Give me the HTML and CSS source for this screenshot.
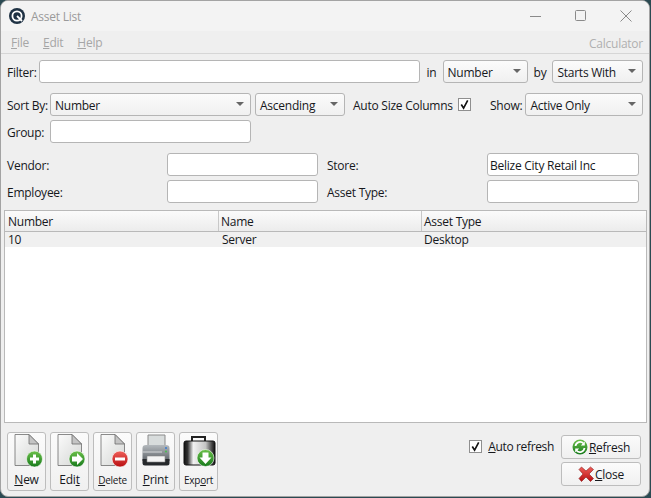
FILE: index.html
```html
<!DOCTYPE html>
<html lang="en">
<head>
  <meta charset="UTF-8">
  <title>Asset List</title>
  <link rel="stylesheet" href="styles.css">
</head>
<body>
  <svg class="defs" width="0" height="0">
    <defs>
      <linearGradient id="paper" x1="0" y1="0" x2="1" y2="1">
        <stop offset="0" stop-color="#fbfbfb"/>
        <stop offset="1" stop-color="#d4d6d4"/>
      </linearGradient>
      <linearGradient id="green" x1="0" y1="0" x2="0" y2="1">
        <stop offset="0" stop-color="#6cc04a"/>
        <stop offset="1" stop-color="#177a1c"/>
      </linearGradient>
      <linearGradient id="red" x1="0" y1="0" x2="0" y2="1">
        <stop offset="0" stop-color="#f0605a"/>
        <stop offset="1" stop-color="#b80d10"/>
      </linearGradient>
      <linearGradient id="metal" x1="0" y1="0" x2="1" y2="0">
        <stop offset="0" stop-color="#111"/>
        <stop offset="0.12" stop-color="#333"/>
        <stop offset="0.3" stop-color="#f2f2f2"/>
        <stop offset="0.7" stop-color="#c4c4c4"/>
        <stop offset="0.9" stop-color="#444"/>
        <stop offset="1" stop-color="#111"/>
      </linearGradient>
      <linearGradient id="printer" x1="0" y1="0" x2="0" y2="1">
        <stop offset="0" stop-color="#b4b9bd"/>
        <stop offset="1" stop-color="#5f646a"/>
      </linearGradient>
      <symbol id="page" viewBox="0 0 26 33">
        <path d="M1 .5H15L24.5 10V31.5H1Z" fill="url(#paper)" stroke="#6d6d6d" stroke-width=".8"/>
        <path d="M15 .5V10H24.5Z" fill="#c4c4c4" stroke="#6d6d6d" stroke-width=".8"/>
      </symbol>
    </defs>
  </svg>

  <div class="window">
    <!-- Title bar -->
    <div class="titlebar">
      <svg class="logo" viewBox="0 0 16 16">
        <circle cx="8" cy="8" r="8" fill="#1f3244"/>
        <circle cx="8" cy="8" r="4.6" fill="none" stroke="#fff" stroke-width="1.8"/>
        <path d="M8 8L13 13" stroke="#fff" stroke-width="1.8"/>
      </svg>
      <span class="title">Asset List</span>
      <div class="win-btns">
        <svg viewBox="0 0 12 12"><path d="M0 6.5H11" stroke="#8a8a8a"/></svg>
        <svg viewBox="0 0 12 12"><rect x=".5" y=".5" width="10" height="10" rx="1" fill="none" stroke="#8a8a8a"/></svg>
        <svg viewBox="0 0 12 12"><path d="M.5 .5L11.5 11.5M11.5 .5L.5 11.5" stroke="#8a8a8a"/></svg>
      </div>
    </div>

    <!-- Menu -->
    <div class="menubar">
      <span class="menu"><u>F</u>ile</span>
      <span class="menu"><u>E</u>dit</span>
      <span class="menu"><u>H</u>elp</span>
      <span class="calc">Calculator</span>
    </div>

    <!-- Filters -->
    <div class="filters">
      <div class="row row-filter">
        <label>Filter:</label>
        <input type="text" class="grow">
        <label class="in">in</label>
        <div class="combo w-in">Number</div>
        <label class="by">by</label>
        <div class="combo w-by">Starts With</div>
      </div>
      <div class="row row-sort">
        <label>Sort By:</label>
        <div class="combo w-sort">Number</div>
        <div class="combo w-order">Ascending</div>
        <label class="autosize">Auto Size Columns</label>
        <span class="check">
          <svg viewBox="0 0 12 12"><path d="M2.5 6L5 10L9.5 1.5" fill="none" stroke="#111" stroke-width="1.8"/></svg>
        </span>
        <label class="show">Show:</label>
        <div class="combo w-show">Active Only</div>
      </div>
      <div class="row row-group">
        <label>Group:</label>
        <input type="text" class="w-group">
      </div>
      <div class="detail-grid">
        <label>Vendor:</label>
        <input type="text">
        <label>Store:</label>
        <input type="text" value="Belize City Retail Inc">
        <label>Employee:</label>
        <input type="text">
        <label>Asset Type:</label>
        <input type="text">
      </div>
    </div>

    <!-- Table -->
    <div class="list">
      <div class="list-head">
        <div class="col-number">Number</div>
        <div class="col-name">Name</div>
        <div class="col-type">Asset Type</div>
      </div>
      <div class="list-row">
        <div class="col-number">10</div>
        <div class="col-name">Server</div>
        <div class="col-type">Desktop</div>
      </div>
    </div>

    <!-- Bottom buttons -->
    <div class="footer">
      <div class="tools">
        <button class="tool">
          <svg class="tool-icon" viewBox="0 0 36 38">
            <use href="#page" x="5" y="0" width="26" height="33"/>
            <circle cx="25.5" cy="25" r="8" fill="url(#green)" stroke="#fff" stroke-width=".6"/>
            <path d="M25.5 20.5V29.5M21 25H30" stroke="#fff" stroke-width="3"/>
          </svg>
          <span><u>N</u>ew</span>
        </button>
        <button class="tool">
          <svg class="tool-icon" viewBox="0 0 36 38">
            <use href="#page" x="5" y="0" width="26" height="33"/>
            <circle cx="25" cy="25" r="8" fill="url(#green)" stroke="#fff" stroke-width=".6"/>
            <path d="M20 22.5H25V19L31 25L25 31V27.5H20Z" fill="#fff"/>
          </svg>
          <span>Edi<u>t</u></span>
        </button>
        <button class="tool">
          <svg class="tool-icon" viewBox="0 0 36 38">
            <use href="#page" x="5" y="0" width="26" height="33"/>
            <circle cx="25" cy="25" r="8" fill="url(#red)" stroke="#fff" stroke-width=".6"/>
            <path d="M20 25H30" stroke="#fff" stroke-width="3"/>
          </svg>
          <span class="small"><u>D</u>elete</span>
        </button>
        <button class="tool">
          <svg class="tool-icon" viewBox="0 0 36 38">
            <path d="M10 1H27V12H10Z" fill="#d8dcdc" stroke="#8a8a8a"/>
            <path d="M4.5 14Q4.5 11 8 11H28Q31.5 11 31.5 14V27H4.5Z" fill="url(#printer)"/>
            <circle cx="28" cy="14" r="1.1" fill="#3f7fd0"/>
            <circle cx="28" cy="17.5" r="1.1" fill="#4dbb55"/>
            <path d="M4.5 18H24" stroke="#d5d8da" stroke-width="1.2"/>
            <path d="M4.5 25H31.5V29Q31.5 31.5 29 31.5H7Q4.5 31.5 4.5 29Z" fill="#26292c"/>
            <path d="M9 22H27V28H9Z" fill="#f4f4f4" stroke="#888" stroke-width=".6"/>
          </svg>
          <span><u>P</u>rint</span>
        </button>
        <button class="tool">
          <svg class="tool-icon" viewBox="0 0 36 38">
            <path d="M11 7V3H24V7" fill="none" stroke="#222" stroke-width="2"/>
            <rect x="3" y="7" width="31" height="24" rx="2" fill="url(#metal)" stroke="#111"/>
            <circle cx="24.5" cy="24" r="8.5" fill="url(#green)" stroke="#fff" stroke-width=".6"/>
            <path d="M21.5 18.5H27.5V23.5H30.5L24.5 30L18.5 23.5H21.5Z" fill="#fff"/>
          </svg>
          <span class="small">Exp<u>o</u>rt</span>
        </button>
      </div>
      <div class="auto-refresh">
        <span class="check">
          <svg viewBox="0 0 12 12"><path d="M2.5 6L5 10L9.5 1.5" fill="none" stroke="#111" stroke-width="1.8"/></svg>
        </span>
        <span class="auto-label"><u>A</u>uto refresh</span>
      </div>
      <div class="actions">
        <button class="action">
          <svg viewBox="0 0 16 16">
            <circle cx="8" cy="8" r="7.5" fill="url(#green)"/>
            <path d="M3.5 7A4.6 4.6 0 0 1 11.5 4.5M12.5 9A4.6 4.6 0 0 1 4.5 11.5" fill="none" stroke="#fff" stroke-width="1.8"/>
            <path d="M12.8 2.5V6.5H8.8Z M3.2 13.5V9.5H7.2Z" fill="#fff"/>
          </svg>
          <span><u>R</u>efresh</span>
        </button>
        <button class="action">
          <svg viewBox="0 0 16 16">
            <path d="M1 3.5L3.5 1L8 5L12.5 1L15.5 3.5L11 8L15.5 12.5L12.5 15.5L8 11L3.5 15.5L1 12.5L5 8Z" fill="url(#red)" stroke="#8a1a1a" stroke-width=".6"/>
          </svg>
          <span><u>C</u>lose</span>
        </button>
      </div>
    </div>
  </div>
</body>
</html>
```

FILE: styles.css
```css
/* General */
* {
  box-sizing: border-box;
}

html, body {
  margin: 0;
  height: 498px;
  overflow: hidden;
}

body {
  width: 651px;
  background: #2b4a52;
  font-family: 'Open Sans', 'Noto Sans', sans-serif;
  font-size: 12px;
  letter-spacing: -0.25px;
  color: #16181c;
}

.defs {
  position: absolute;
}

.window {
  width: 650px;
  height: 497px;
  display: flex;
  flex-direction: column;
  background: #efefef;
  border: 1px solid #a3a3a3;
  border-radius: 8px;
  overflow: hidden;
}

/* Title bar */
.titlebar {
  height: 30px;
  flex: none;
  display: flex;
  align-items: center;
  padding-left: 8px;
  background: #f3f3f3;
}

.logo {
  width: 16px;
  height: 16px;
}

.title {
  margin-left: 6px;
  color: #9a9a9a;
}

.win-btns {
  margin-left: auto;
  display: flex;
  gap: 33px;
  padding-right: 17px;
}

.win-btns svg {
  width: 12px;
  height: 12px;
}

/* Menu */
.menubar {
  height: 23px;
  flex: none;
  display: flex;
  align-items: center;
  gap: 14px;
  padding: 0 6px 0 10px;
  border-bottom: 1px solid #d6d6d6;
  color: #a6a6a6;
}

.calc {
  margin-left: auto;
  padding-top: 2px;
  color: #b0b0b0;
}

/* Filters */
.filters {
  padding: 6px 6px 0;
  flex: none;
}

label {
  flex: none;
  white-space: nowrap;
  padding-top: 1px;
}

.row {
  display: flex;
  align-items: center;
  height: 23px;
}

input {
  height: 23px;
  padding: 2px 2px 0;
  background: #fff;
  border: 1px solid #b5b5b5;
  border-radius: 3px;
  font: inherit;
  letter-spacing: inherit;
  color: inherit;
  outline: none;
}

.grow {
  flex: none;
  width: 381px;
  margin-left: 2px;
}

.in {
  width: 9px;
  margin: 0 7px;
}

.by {
  margin: 0 6px;
}

.combo {
  position: relative;
  flex: none;
  height: 23px;
  line-height: 23px;
  padding-left: 4px;
  background: linear-gradient(#fbfbfb, #f0f0f0);
  border: 1px solid #b5b5b5;
  border-radius: 3px;
}

.combo::after {
  content: "";
  position: absolute;
  right: 6px;
  top: 8px;
  border-left: 4px solid transparent;
  border-right: 4px solid transparent;
  border-top: 4px solid #666;
}

.w-in { width: 85px; }
.w-by { width: 91px; }
.w-sort { width: 201px; margin-left: 2px; }
.w-order { width: 90px; margin-left: 4px; }
.w-show { width: 118px; }
.w-group { flex: none; width: 201px; margin-left: 6px; }

.row-sort {
  margin-top: 10px;
}

.row-group {
  margin-top: 4px;
}

.autosize {
  width: 100px;
  margin-left: 8px;
}

.check {
  flex: none;
  width: 13px;
  height: 13px;
  display: block;
  background: #fff;
  border: 1px solid #8f8f8f;
}

.check svg {
  display: block;
  width: 11px;
  height: 11px;
}

.row-sort .check {
  margin-left: 5px;
}

.show {
  margin: 0 3px 0 19px;
}

.detail-grid {
  margin-top: 10px;
  display: grid;
  grid-template-columns: 160px 151px 169px 152px;
  grid-auto-rows: 23px;
  row-gap: 4px;
  align-items: center;
}

.detail-grid label:nth-of-type(even) {
  padding-left: 9px;
}

/* Table */
.list {
  margin: 7px 2px 0 3px;
  height: 213px;
  flex: none;
  background: #fff;
  border: 1px solid #b9b9b9;
}

.list-head, .list-row {
  display: flex;
}

.list-head {
  height: 21px;
  line-height: 21px;
  background: linear-gradient(#fbfbfb, #ececec);
  border-bottom: 1px solid #b9b9b9;
}

.list-head > div + div {
  border-left: 1px solid #c8c8c8;
  padding-left: 2px;
}

.list-row {
  height: 15px;
  line-height: 15px;
  background: #f0f0f0;
}

.col-number {
  width: 213px;
  padding-left: 3px;
}

.col-name {
  width: 203px;
  padding-left: 3px;
}

.list-row .col-name {
  padding-left: 4px;
}

.col-type {
  flex: 1;
  padding-left: 3px;
}

/* Footer */
.footer {
  flex: 1;
  display: flex;
  padding: 9px 8px 0 6px;
}

button {
  font: inherit;
  letter-spacing: inherit;
  color: inherit;
  background: linear-gradient(#fbfbfb, #f0f0f0);
  border: 1px solid #bdbdbd;
  border-radius: 3px;
  padding: 0;
}

.tools {
  display: flex;
  gap: 4px;
}

.tool {
  width: 39px;
  height: 59px;
  display: flex;
  flex-direction: column;
  align-items: center;
  padding-top: 1px;
}

.tool-icon {
  flex: none;
  width: 36px;
  height: 38px;
  display: block;
}

.tool span {
  line-height: 15px;
}

.tool span.small {
  margin-top: 1px;
  font-size: 10px;
}

.auto-refresh {
  display: flex;
  align-items: center;
  gap: 6px;
  height: 13px;
  margin: 8px 7px 0 auto;
}

.auto-label {
  white-space: nowrap;
  letter-spacing: -0.35px;
}

.actions {
  display: flex;
  flex-direction: column;
  gap: 3px;
  margin-top: 3px;
}

.action {
  width: 80px;
  height: 24px;
  display: flex;
  align-items: center;
  justify-content: center;
  gap: 1px;
}

.action svg {
  width: 16px;
  height: 16px;
}
```
